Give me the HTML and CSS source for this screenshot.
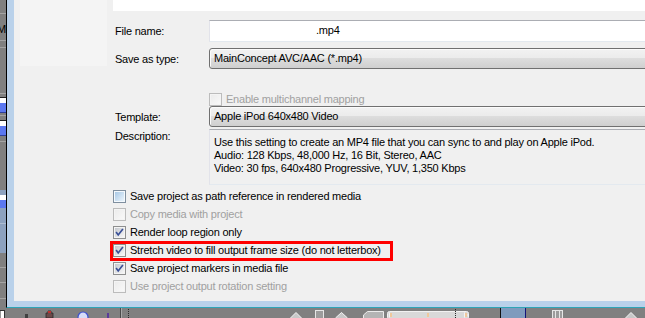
FILE: index.html
```html
<!DOCTYPE html>
<html>
<head>
<meta charset="utf-8">
<title>Render As</title>
<link rel="stylesheet" href="styles.css">
</head>
<body>
<svg class="defs" width="0" height="0" aria-hidden="true">
  <defs>
    <linearGradient id="g-check" x1="0" y1="0" x2="1" y2="1">
      <stop offset="0" stop-color="#c4c8ce"/>
      <stop offset="1" stop-color="#f7f7f7"/>
    </linearGradient>
    <linearGradient id="g-hot" x1="0" y1="0" x2="1" y2="1">
      <stop offset="0" stop-color="#a9c9e6"/>
      <stop offset="1" stop-color="#eaf4fc"/>
    </linearGradient>
    <linearGradient id="g-off" x1="0" y1="0" x2="1" y2="1">
      <stop offset="0" stop-color="#ececec"/>
      <stop offset="1" stop-color="#f8f8f8"/>
    </linearGradient>
    <symbol id="cb-on" viewBox="0 0 13 13">
      <rect x="0.5" y="0.5" width="12" height="12" fill="#f4f4f4" stroke="#8e8f8f"/>
      <rect x="2" y="2" width="9" height="9" fill="url(#g-check)"/>
      <path d="M3.1 6.1 L5.2 8.9 L9.9 2.9" fill="none" stroke="#394f97" stroke-width="1.7"/>
    </symbol>
    <symbol id="cb-hot" viewBox="0 0 13 13">
      <rect x="0.5" y="0.5" width="12" height="12" fill="#f4f9fd" stroke="#7f8f9f"/>
      <rect x="2" y="2" width="9" height="9" fill="url(#g-hot)"/>
    </symbol>
    <symbol id="cb-off" viewBox="0 0 13 13">
      <rect x="0.5" y="0.5" width="12" height="12" fill="#f4f4f4" stroke="#bcbcbc"/>
      <rect x="2" y="2" width="9" height="9" fill="url(#g-off)"/>
    </symbol>
  </defs>
</svg>

<div class="screen">
  <div class="upper">
    <div class="strip">
      <svg width="6" height="308" viewBox="0 0 6 308" aria-hidden="true">
        <rect width="6" height="308" fill="#808080"/>
        <rect y="13" width="6" height="1" fill="#a4a4a4"/>
        <text x="-3" y="33" font-family="Liberation Sans, sans-serif" font-size="11" fill="#000">Mo</text>
        <rect y="40" width="6" height="1" fill="#a4a4a4"/>
        <rect y="47" width="6" height="1" fill="#a4a4a4"/>
        <rect y="93" width="6" height="1" fill="#a4a4a4"/>
        <rect y="97" width="6" height="1" fill="#202020"/>
        <rect y="98" width="6" height="5" fill="#ffffff"/>
        <rect y="103" width="6" height="9" fill="#5b78f0"/>
        <rect y="112" width="6" height="1" fill="#2d3f9a"/>
        <rect y="115" width="6" height="1" fill="#a4a4a4"/>
        <rect y="120" width="6" height="1" fill="#202020"/>
        <rect y="121" width="6" height="5" fill="#ffffff"/>
        <rect y="126" width="6" height="9" fill="#5b78f0"/>
        <rect y="135" width="6" height="1" fill="#2d3f9a"/>
        <rect y="141" width="6" height="1" fill="#a4a4a4"/>
        <rect y="190" width="6" height="63" fill="#8da2bf"/>
        <rect y="195" width="6" height="5" fill="#ffffff"/>
        <rect y="200" width="6" height="8" fill="#5b78f0"/>
        <rect y="223" width="6" height="1" fill="#aebdd1"/>
        <rect y="267" width="6" height="1" fill="#a4a4a4"/>
        <rect y="282" width="6" height="1" fill="#a4a4a4"/>
        <rect y="298" width="6" height="1" fill="#a4a4a4"/>
      </svg>
    </div>

    <div class="dialog">
      <div class="client">
        <div class="nav"></div>
        <div class="form">
          <div class="filelist"></div>

          <div class="row r-file">
            <span class="lbl">File name:</span>
            <div class="textbox">.mp4</div>
          </div>

          <div class="row r-type">
            <span class="lbl">Save as type:</span>
            <div class="combo">MainConcept AVC/AAC (*.mp4)</div>
          </div>

          <div class="row r-multi">
            <span class="lbl"></span>
            <svg class="cb"><use href="#cb-off"/></svg>
            <span class="txt disabled">Enable multichannel mapping</span>
          </div>

          <div class="row r-template">
            <span class="lbl">Template:</span>
            <div class="combo">Apple iPod 640x480 Video</div>
          </div>

          <div class="row r-desc">
            <span class="lbl">Description:</span>
            <div class="desc">
              <div>Use this setting to create an MP4 file that you can sync to and play on Apple iPod.</div>
              <div>Audio: 128 Kbps, 48,000 Hz, 16 Bit, Stereo, AAC</div>
              <div>Video: 30 fps, 640x480 Progressive, YUV, 1,350 Kbps</div>
            </div>
          </div>

          <ul class="checks">
            <li><svg class="cb"><use href="#cb-hot"/></svg><span class="txt">Save project as path reference in rendered media</span></li>
            <li><svg class="cb"><use href="#cb-off"/></svg><span class="txt disabled">Copy media with project</span></li>
            <li><svg class="cb"><use href="#cb-on"/></svg><span class="txt">Render loop region only</span></li>
            <li class="marked"><svg class="cb"><use href="#cb-on"/></svg><span class="txt">Stretch video to fill output frame size (do not letterbox)</span></li>
            <li><svg class="cb"><use href="#cb-on"/></svg><span class="txt">Save project markers in media file</span></li>
            <li><svg class="cb"><use href="#cb-off"/></svg><span class="txt disabled">Use project output rotation setting</span></li>
          </ul>
        </div>
      </div>
    </div>
  </div>

  <div class="toolbar">
    <svg width="645" height="10" viewBox="0 0 645 10" aria-hidden="true">
      <rect x="0" y="2.5" width="4.5" height="8" fill="#ffffff" stroke="#303030"/>
      <rect x="25" y="6" width="3" height="4" fill="#404040"/>
      <path d="M46 10 V5 H48 V3 H51 V5 H53 V10 Z" fill="#6a4a4a" stroke="#2a2a2a" stroke-width="0.8"/>
      <rect x="48" y="3" width="3" height="2" fill="#c03030"/>
      <circle cx="83" cy="9" r="5" fill="#d6dcf8" stroke="#3b4fd0" stroke-width="1.2"/>
      <rect x="107" y="5" width="2" height="5" fill="#5a3a9a"/>
      <rect x="120" y="0" width="1" height="10" fill="#4a4a4a"/>
      <rect x="121" y="0" width="1" height="10" fill="#a8a8a8"/>
      <path d="M128.5 1 V10" stroke="#2a2a2a" stroke-dasharray="1 1"/>
      <path d="M290.5 10 L296 4.5 L301.5 10" fill="#c8c8c8" stroke="#f4f4f4"/>
      <rect x="315.5" y="2.5" width="8" height="8" fill="#9c9c9c" stroke="#e6e6e6"/>
      <path d="M335.5 10 L341.5 4.5 L347.5 10" fill="#c8c8c8" stroke="#f4f4f4"/>
      <path d="M363.5 10 V7 L367.5 3.5 H383.5 V10" fill="#b4b4b4" stroke="#ececec"/>
      <rect x="387.5" y="3.5" width="81" height="8" rx="2" fill="#d9d9d9" stroke="#f2f2f2"/>
      <path d="M389 4 L392 7 L389 10 Z" fill="#f4f4f4"/>
      <rect x="390" y="5" width="2" height="4" fill="#f0c89c"/>
      <rect x="427" y="5" width="2" height="4" fill="#f0c89c"/>
      <path d="M455.5 1 V10" stroke="#2a2a2a" stroke-dasharray="1 1"/>
      <path d="M464 4 L468 7 L464 10 Z" fill="#f4f4f4"/>
      <rect x="465" y="5" width="2" height="4" fill="#f0c89c"/>
      <rect x="500" y="0" width="1" height="10" fill="#101010"/>
      <rect x="501" y="0" width="24" height="10" fill="#7f9bbd"/>
      <rect x="525" y="0" width="1" height="10" fill="#14147a"/>
      <rect x="552.5" y="2.5" width="10" height="8" fill="#9c9c9c" stroke="#e6e6e6"/>
      <rect x="555" y="3" width="1" height="7" fill="#e6e6e6"/>
      <rect x="559" y="3" width="1" height="7" fill="#e6e6e6"/>
      <path d="M625.5 10 L631 4.5 L636.5 10" fill="#c8c8c8" stroke="#f4f4f4"/>
    </svg>
  </div>
</div>
</body>
</html>
```

FILE: styles.css
```css
*,
*::before,
*::after {
  box-sizing: border-box;
}

html,
body {
  margin: 0;
  padding: 0;
}

body {
  width: 645px;
  height: 318px;
  overflow: hidden;
  background: #808080;
  font-family: "Liberation Sans", Arial, sans-serif;
  font-size: 11px;
  letter-spacing: -0.22px;
  color: #000;
}

.defs {
  position: absolute;
  width: 0;
  height: 0;
  overflow: hidden;
}

.screen {
  display: flex;
  flex-direction: column;
  width: 645px;
  height: 318px;
  overflow: hidden;
}

.upper {
  display: flex;
  flex: none;
  height: 308px;
}

.strip {
  flex: none;
  width: 6px;
}

.strip svg,
.toolbar svg {
  display: block;
}

.dialog {
  flex: none;
  display: flex;
  width: 700px;
  background: #b9d1ea;
  border-left: 1px solid #000;
  border-bottom: 1px solid #2ea5b6;
  padding: 0 0 6px 7px;
}

.client {
  flex: 1;
  display: flex;
  gap: 6px;
  padding-left: 6px;
  background: #f0f0f0;
}

.nav {
  flex: none;
  width: 87px;
  height: 66px;
  background: #f4f4f4;
}

.form {
  flex: 1;
  display: flex;
  flex-direction: column;
}

.filelist {
  height: 11px;
  background: #fff;
}

.row {
  display: flex;
  align-items: center;
}

.lbl {
  flex: none;
  width: 96px;
  padding-left: 2px;
}

.r-file {
  margin-top: 9px;
  height: 22px;
}

.textbox {
  flex: 1;
  height: 22px;
  background: #fff;
  border: 1px solid;
  border-color: #abadb3 #e3e9ef #e3e9ef #e2e3ea;
  padding-left: 106px;
  line-height: 19px;
}

.combo {
  flex: 1;
  height: 21px;
  border: 1px solid #707070;
  border-radius: 3px;
  background: linear-gradient(#f2f2f2, #ebebeb 50%, #dddddd 50%, #cfcfcf);
  box-shadow: inset 1px 1px 0 #fbfbfb;
  padding-left: 4px;
  line-height: 18px;
}

.r-type {
  margin-top: 6px;
}

.r-multi {
  margin-top: 24px;
  height: 13px;
  gap: 4px;
}

.r-multi .lbl {
  width: 92px;
}

.r-template {
  margin-top: 0;
}

.r-desc {
  margin-top: 2px;
  align-items: flex-start;
}

.r-desc .lbl {
  padding-top: 1px;
  line-height: 13px;
}

.desc {
  flex: 1;
  height: 56px;
  border: 1px solid;
  border-color: #abadb3 #dbdfe6 #e3e9ef #e2e3ea;
  padding: 6px 0 0 4px;
  line-height: 13px;
}

.cb {
  flex: none;
  display: block;
  width: 13px;
  height: 13px;
}

.txt {
  line-height: 13px;
}

.disabled {
  color: #a0a0a0;
}

.checks {
  list-style: none;
  margin: 3px 0 0;
  padding: 0;
}

.checks li {
  position: relative;
  display: flex;
  align-items: flex-start;
  gap: 4px;
  height: 18px;
}

.checks .cb,
.checks .txt {
  margin-top: 2px;
}

.marked::after {
  content: "";
  position: absolute;
  left: -3px;
  top: -1px;
  width: 283px;
  height: 20px;
  border: 3px solid #ff0000;
}

.toolbar {
  flex: none;
  height: 10px;
  background: #808080;
}
```
